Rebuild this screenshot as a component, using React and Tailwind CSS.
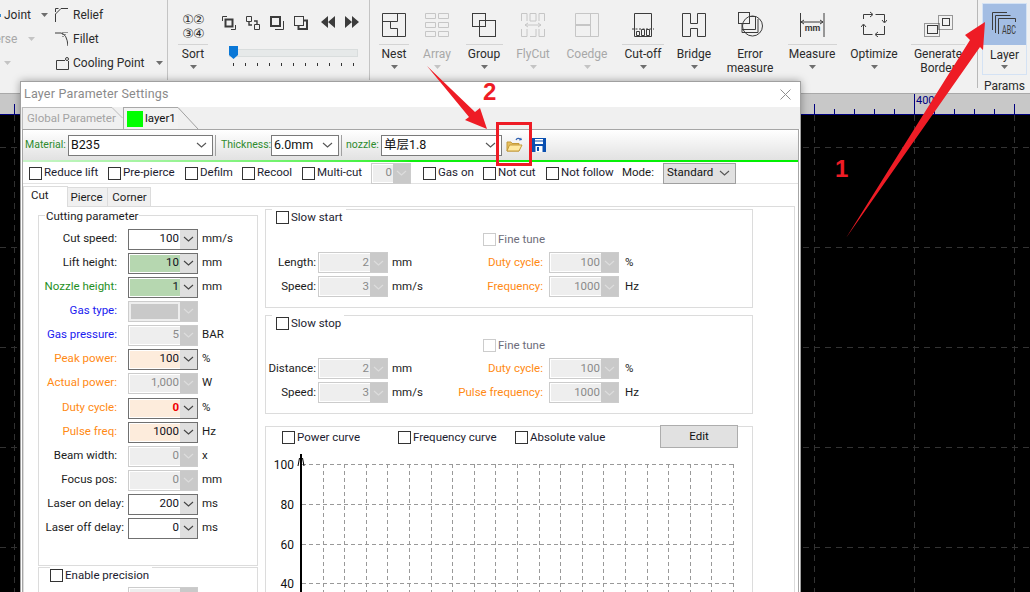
import React from "react";

const RED = "#ee1c25";

function Caret({ gray }) {
  return (
    <svg width="7" height="4" viewBox="0 0 7 4" className="block">
      <path d="M0 0H7L3.5 4Z" fill={gray ? "#c4c4c4" : "#6e6e6e"} />
    </svg>
  );
}

function Chevron({ color = "#555" }) {
  return (
    <svg width="11" height="6" viewBox="0 0 11 6" className="block">
      <path d="M1 1L5.5 5L10 1" fill="none" stroke={color} strokeWidth="1.1" />
    </svg>
  );
}

function Check({ label, disabled, className = "" }) {
  return (
    <div className={`flex items-center gap-[2px] whitespace-nowrap ${className}`}>
      <span
        className={`block h-[13px] w-[13px] shrink-0 border bg-white ${
          disabled ? "border-[#cccccc]" : "border-[#333333]"
        }`}
      />
      <span className={disabled ? "text-[#6d6d7a]" : "text-[#1c1c30]"}>{label}</span>
    </div>
  );
}

// number box with dropdown, the way the dialog draws them
function Spin({ value, tone = "white", width = "w-[70px]" }) {
  const off = tone === "off";
  const fill = {
    white: "bg-white",
    green: "bg-[#b6d7b0]",
    orange: "bg-[#fdecdc]",
    off: "bg-[#eeeeee]",
  }[tone];
  return (
    <div
      className={`flex h-[21px] shrink-0 border ${width} ${
        off ? "border-[#cccccc]" : "border-[#707070]"
      } bg-white`}
    >
      <div
        className={`m-[1px] mr-0 flex flex-1 items-center justify-end pr-[1px] ${fill} ${
          off ? "text-[#8a8a8a]" : "text-[#111122]"
        }`}
      >
        {value}
      </div>
      <div
        className={`flex w-[17px] items-center justify-center ${
          off ? "bg-[#c9c9c9]" : "bg-[#dfdfdf]"
        }`}
      >
        <Chevron color={off ? "#dddddd" : "#444"} />
      </div>
    </div>
  );
}

function Select({ value, width }) {
  return (
    <div className={`flex h-[21px] shrink-0 items-center justify-between border border-[#7a7a7a] bg-white pl-[2px] pr-[5px] text-[12.5px] ${width}`}>
      <span className="text-[#111]">{value}</span>
      <Chevron />
    </div>
  );
}

const cutRows = [
  { label: "Cut speed:", value: "100", unit: "mm/s" },
  { label: "Lift height:", value: "10", tone: "green", unit: "mm" },
  { label: "Nozzle height:", value: "1", tone: "green", unit: "mm", color: "text-[#1f8f1f]" },
  { label: "Gas type:", color: "text-[#1a1af0]", gas: true },
  { label: "Gas pressure:", value: "5", tone: "off", unit: "BAR", color: "text-[#1a1af0]" },
  { label: "Peak power:", value: "100", tone: "orange", unit: "%", color: "text-[#ff8a14]" },
  { label: "Actual power:", value: "1,000", tone: "off", unit: "W", color: "text-[#ff8a14]" },
  { label: "Duty cycle:", value: <b className="text-[#f00000]">0</b>, tone: "orange", unit: "%", color: "text-[#ff8a14]", gap: true },
  { label: "Pulse freq:", value: "1000", tone: "orange", unit: "Hz", color: "text-[#ff8a14]" },
  { label: "Beam width:", value: "0", tone: "off", unit: "x" },
  { label: "Focus pos:", value: "0", tone: "off", unit: "mm" },
  { label: "Laser on delay:", value: "200", unit: "ms", tight: true },
  { label: "Laser off delay:", value: "0", unit: "ms", tight: true },
];

function CutRow({ row }) {
  return (
    <div className={`flex h-[24px] items-center ${row.gap ? "mt-[1px]" : ""}`}>
      <div
        className={`w-[89px] whitespace-nowrap text-right ${row.tight ? "pr-[4px]" : "pr-[11px]"} ${
          row.color || "text-[#1c1c1c]"
        }`}
      >
        {row.label}
      </div>
      {row.gas ? (
        <div className="flex h-[21px] w-[70px] border border-[#cccccc] bg-[#eeeeee]">
          <div className="m-[2px] flex-1 bg-[#c9c9c9]" />
          <div className="flex w-[17px] items-center justify-center bg-[#c9c9c9]">
            <Chevron color="#dddddd" />
          </div>
        </div>
      ) : (
        <Spin value={row.value} tone={row.tone} />
      )}
      <span className="ml-[4px] text-[#1c1c1c]">{row.unit}</span>
    </div>
  );
}

function SlowGroup({ title, rows, height }) {
  return (
    <div className={`relative border border-[#dcdcdc] ${height}`}>
      <div className="absolute left-[6px] top-[-1px] bg-white pl-[4px] pr-[3px]">
        <Check label={title} />
      </div>
      <div className="pl-[217px] pt-[21px]">
        <Check label="Fine tune" disabled />
      </div>
      <div className="mt-[4px] flex flex-col gap-[3px]">
        {rows.map((r) => (
          <div key={r[0].label} className="flex">
            <div className="flex w-[161px] items-center">
              <div className="w-[50px] whitespace-nowrap text-right text-[#1c1c1c]">{r[0].label}</div>
              <div className="ml-[2px]">
                <Spin value={r[0].value} tone="off" />
              </div>
              <span className="ml-[4px] text-[#1c1c1c]">{r[0].unit}</span>
            </div>
            <div className="flex items-center">
              <div className="w-[116px] whitespace-nowrap text-right text-[#ff8a14]">{r[1].label}</div>
              <div className="ml-[6px]">
                <Spin value={r[1].value} tone="off" />
              </div>
              <span className="ml-[6px] text-[#1c1c1c]">{r[1].unit}</span>
            </div>
          </div>
        ))}
      </div>
    </div>
  );
}

function PowerChart() {
  const xs = Array.from({ length: 20 }, (_, i) => 35 + 21.6 * (i + 1));
  const ys = [12.5, 52.5, 92.5, 131.5];
  return (
    <svg width="486" height="140" viewBox="0 0 486 140" className="block">
      {ys.map((y) => (
        <line key={y} x1="36" x2="467.5" y1={y} y2={y} stroke="#999999" strokeDasharray="4 3" />
      ))}
      {xs.map((x) => (
        <line key={x} x1={Math.round(x) + 0.5} x2={Math.round(x) + 0.5} y1="12" y2="140" stroke="#999999" strokeDasharray="4 3" />
      ))}
      <line x1="35" x2="35" y1="2" y2="140" stroke="#000" strokeWidth="2" />
      <path d="M32 14L33.5 6M38 14L36.5 6" stroke="#000" fill="none" />
      <g fontSize="12" fill="#111">
        <text x="28" y="17" textAnchor="end">100</text>
        <text x="28" y="57" textAnchor="end">80</text>
        <text x="28" y="97" textAnchor="end">60</text>
        <text x="28" y="136" textAnchor="end">40</text>
      </g>
    </svg>
  );
}

const S = "#3c3c3c";
const G = "#c6c6c6";

const icons = {
  nest: (
    <svg width="24" height="24" viewBox="0 0 24 24" fill="none" stroke={S}>
      <path d="M.5 .5H23.5V23.5H.5Z M.5 8.5H15.5V.5 M8.5 8.5V15.5H15.5V23.5" />
    </svg>
  ),
  array: (
    <svg width="24" height="24" viewBox="0 0 24 24" fill="none" stroke={G}>
      <path d="M.5 .5h10v5h-10Z M13.5 .5h10v5h-10Z M.5 9.5h10v5h-10Z M13.5 9.5h10v5h-10Z M.5 18.5h10v5h-10Z M13.5 18.5h10v5h-10Z" />
    </svg>
  ),
  group: (
    <svg width="24" height="24" viewBox="0 0 24 24" fill="none" stroke={S}>
      <rect x=".5" y=".5" width="13" height="13" />
      <rect x="7.5" y="7.5" width="16" height="16" />
    </svg>
  ),
  flycut: (
    <svg width="24" height="24" viewBox="0 0 24 24" fill="none" stroke={G}>
      <path d="M.5 8V.5H6V8 M9 .5H15V8H9Z M18 8V.5H23.5V8 M.5 16V23.5H6V16 M9 23.5H15V16 M18 16V23.5H23.5V16 M4 12H20 M4 12L7 10M4 12L7 14 M20 12L17 10M20 12L17 14" />
    </svg>
  ),
  coedge: (
    <svg width="24" height="24" viewBox="0 0 24 24" fill="none" stroke={G}>
      <path d="M.5 .5H23.5V23.5H.5Z M15.5 .5V23.5 M.5 11.5H15.5 M.5 12.5H15.5" />
    </svg>
  ),
  cutoff: (
    <svg width="22" height="24" viewBox="0 0 22 24" fill="none" stroke={S}>
      <path d="M2.5 16V.5H19.5V16 M2.5 16V23.5H19.5V16" />
      <path d="M0 16H22" strokeDasharray="2 1.5" />
      <path d="M4.5 18.5h3v4h-3Z M9.5 16.5h3v6h-3Z M14.5 16.5h3v6h-3Z" />
    </svg>
  ),
  bridge: (
    <svg width="24" height="24" viewBox="0 0 24 24" fill="none" stroke={S}>
      <path d="M.5 .5H8.5V10.5H15.5V.5H23.5V23.5H15.5V15.5H8.5V23.5H.5Z" />
    </svg>
  ),
  error: (
    <svg width="25" height="25" viewBox="0 0 25 25" fill="none" stroke={S}>
      <rect x=".5" y=".5" width="11" height="11" />
      <circle cx="14.5" cy="14" r="10" />
      <path d="M4 17.5H17.5V4.5H11.5 M4 11.5V20.5H20V7" />
    </svg>
  ),
  measure: (
    <svg width="25" height="24" viewBox="0 0 25 24" fill="none" stroke={S}>
      <path d="M.5 0V24 M24 0V24 M1 9H23 M1 9L4 7M1 9L4 11 M23 9L20 7M23 9L20 11" />
      <text x="12.5" y="18" fontSize="9" fontWeight="700" textAnchor="middle" fill={S} stroke="none">mm</text>
    </svg>
  ),
  optimize: (
    <svg width="26" height="26" viewBox="-1 0 26 26" fill="none" stroke={S}>
      <path d="M1.5 8V3.5H10 M8 1L11 3.5L8 6 M13.5 3.5H22.5V11 M20 9L22.5 12L25 9 M22.5 15V23.5H14 M16 21L13 23.5L16 26 M10.5 23.5H1.5V14 M-1 16L1.5 13L4 16" />
    </svg>
  ),
  generate: (
    <svg width="29" height="22" viewBox="0 0 29 22" fill="none" stroke={S}>
      <path d="M.5 8.5H15.5V21.5H.5Z M14.5 .5H28.5V14.5H14.5Z" strokeDasharray="1 1" />
      <rect x="3.5" y="10.5" width="10" height="8" />
      <rect x="18.5" y="3.5" width="7" height="7" />
    </svg>
  ),
  layer: (
    <svg width="25" height="26" viewBox="0 0 25 26" fill="none" stroke={S}>
      <path d="M.5 18V.5H15 M3.5 21V3.5H18.5 M6.5 22V6.5H23.5V10" />
      <text x="10" y="22" fontSize="12" textLength="14" lengthAdjust="spacingAndGlyphs" fill={S} stroke="none">ABC</text>
    </svg>
  ),
};

const ribbonButtons = [
  { label: "Nest", icon: "nest", w: "w-[36px]", line: "w-[30px]" },
  { label: "Array", icon: "array", w: "w-[50px]", off: true },
  { label: "Group", icon: "group", w: "w-[44px]", line: "w-[37px]" },
  { label: "FlyCut", icon: "flycut", w: "w-[54px]", off: true },
  { label: "Coedge", icon: "coedge", w: "w-[54px]", off: true },
  { label: "Cut-off", icon: "cutoff", w: "w-[58px]", line: "w-[42px]" },
  { label: "Bridge", icon: "bridge", w: "w-[44px]" },
  { label: "Error measure", icon: "error", w: "w-[68px]", noCaret: true, two: true },
  { label: "Measure", icon: "measure", w: "w-[56px]", line: "w-[49px]" },
  { label: "Optimize", icon: "optimize", w: "w-[68px]" },
  { label: "Generate Border", icon: "generate", w: "w-[60px]", line: "w-[54px]", noCaret: true, two: true },
];

function RibbonButton({ b }) {
  return (
    <div className={`flex shrink-0 flex-col items-center ${b.w}`}>
      <div className="flex h-[44px] items-end pb-[7px]">{icons[b.icon]}</div>
      <div className={`h-[1px] ${b.line || "w-0"} bg-[#d4d4d4]`} />
      <div
        className={`mt-[1px] pt-[1px] text-center text-[12px] leading-[14px] ${
          b.off ? "text-[#a8a8a8]" : "text-[#2b2b2b]"
        } ${b.two ? "w-[58px]" : "whitespace-nowrap"}`}
      >
        {b.label}
      </div>
      {!b.noCaret && (
        <div className="mt-[4px]">
          <Caret gray={b.off} />
        </div>
      )}
    </div>
  );
}

function Ribbon() {
  return (
    <div className="flex h-[94px] shrink-0 border-b border-[#a9a9a9] bg-[#f1f1f1] text-[12px] text-[#2b2b2b]">
      <div className="flex h-[80px] w-[168px] shrink-0 border-r border-[#c4c4c4] pt-[6px]">
        <div className="flex w-[55px] shrink-0 flex-col gap-[6px]">
          <div className="flex h-[18px] items-center">
            <span className="mr-[3px] ml-[-1px] h-[3px] w-[2px] bg-[#3a8fd6]" />
            <span>Joint</span>
            <span className="ml-[10px]"><Caret /></span>
          </div>
          <div className="flex h-[18px] items-center text-[#a8a8a8]">
            <span className="ml-[-25px]">Reverse</span>
            <span className="ml-[11px]"><Caret gray /></span>
          </div>
          <div className="flex h-[18px] items-center pl-[4px]"><Caret gray /></div>
        </div>
        <div className="flex flex-col gap-[6px]">
          <div className="flex h-[18px] items-center gap-[5px]">
            <svg width="13" height="14" viewBox="0 0 13 14" fill="none" stroke={S}>
              <path d="M.5 14V6M.5 4V.5H3.5M6 .5H13M.5 6L6 .5" />
            </svg>
            Relief
          </div>
          <div className="flex h-[18px] items-center gap-[5px]">
            <svg width="13" height="14" viewBox="0 0 13 14" fill="none" stroke={S}>
              <path d="M0 1H6Q12 2 13 14" />
              <path d="M8 0V5M10 0V3M12 0V2" strokeDasharray="1 1" />
            </svg>
            Fillet
          </div>
          <div className="flex h-[18px] items-center gap-[4px] whitespace-nowrap pl-[1px]">
            <svg width="13" height="13" viewBox="0 0 13 13" fill="none" stroke={S} className="shrink-0">
              <path d="M.5 3.5H9M12.5 4V12.5H.5V3.5" />
              <circle cx="11" cy="2" r="1.5" />
            </svg>
            <span>Cooling Point</span>
            <span className="ml-[8px]"><Caret /></span>
          </div>
        </div>
      </div>

      <div className="flex h-[80px] w-[202px] shrink-0 border-r border-[#c4c4c4]">
        <div className="ml-[10px] flex w-[30px] flex-col items-center">
          <div className="flex h-[44px] w-[30px] flex-col items-center pt-[13px] font-['DejaVu_Sans',sans-serif] text-[13px] leading-[14px] tracking-[-1px]">
            <span>①②</span>
            <span>③④</span>
          </div>
          <div className="h-[1px] w-[30px] shrink-0 bg-[#d4d4d4]" />
          <div className="pt-[2px] leading-[14px]">Sort</div>
          <div className="mt-[4px]"><Caret /></div>
        </div>
        <div className="ml-[14px] flex w-[140px] flex-col">
          <div className="mt-[16px] flex h-[14px] gap-[10px]">
            <svg width="14" height="14" viewBox="0 0 14 14" fill="none" stroke={S}>
              <path d="M.5 5V.5H5M13.5 9V13.5H9" />
              <rect x="3.5" y="3.5" width="7" height="7" strokeWidth="2" />
            </svg>
            <svg width="14" height="14" viewBox="0 0 14 14" fill="none" stroke={S}>
              <path d="M.5 .5h5v5h-5Z M8.5 8.5h5v5h-5Z" />
              <path d="M3 6v3h3M8 5h3v3" strokeWidth="1.4" />
            </svg>
            <svg width="14" height="14" viewBox="0 0 14 14" fill="none" stroke={S}>
              <rect x="1" y="1" width="9" height="9" strokeWidth="2" />
              <path d="M13.5 5V13.5H5" />
            </svg>
            <svg width="14" height="14" viewBox="0 0 14 14" fill="none" stroke={S}>
              <rect x=".5" y=".5" width="9" height="9" />
              <path d="M10 4.5H13V13H4.5V10" strokeWidth="2" />
            </svg>
            <svg width="14" height="12" viewBox="0 0 14 12" className="ml-[3px]" fill={S}>
              <path d="M7 0V12L0 6Z M14 0V12L7 6Z" />
            </svg>
            <svg width="14" height="12" viewBox="0 0 14 12" fill={S}>
              <path d="M0 0V12L7 6Z M7 0V12L14 6Z" />
            </svg>
          </div>
          <div className="relative ml-[7px] mt-[19px] h-[8px] w-[129px] border border-[#d9dddd] bg-[#e6e9e9]">
            <svg width="9" height="13" viewBox="0 0 9 13" className="absolute left-[-1px] top-[-4px]">
              <path d="M0 0H9V9L4.5 13L0 9Z" fill="#0a78d7" />
            </svg>
          </div>
          <div className="ml-[11px] mt-[6px] flex w-[121px] justify-between">
            {Array.from({ length: 11 }, (_, i) => (
              <span key={i} className="h-[3px] w-[1px] bg-[#333]" />
            ))}
          </div>
        </div>
      </div>

      <div className="relative flex h-[92px] shrink-0 items-start">
        <div className="ml-[6px] flex">
          {ribbonButtons.map((b) => (
            <RibbonButton key={b.label} b={b} />
          ))}
        </div>
        <div className="ml-[9px] h-[88px] w-[1px] bg-[#b8b8b8]" />
        <div className="ml-[4px] flex w-[45px] flex-col items-center">
          <div className="mt-[3px] flex h-[72px] w-[45px] flex-col items-center border border-[#d4e2f4] bg-[#f1f1f1]">
            <div className="flex h-[41px] w-full items-center justify-center bg-[#a3bde3]">{icons.layer}</div>
            <div className="pt-[2px] leading-[16px]">Layer</div>
            <div className="mt-[2px]"><Caret /></div>
          </div>
          <div className="mt-[4px] leading-[14px]">Params</div>
        </div>
      </div>
    </div>
  );
}

function Ruler() {
  const minors = [834, 854, 874, 894, 934, 954, 974, 994];
  return (
    <svg width="1030" height="21" viewBox="0 0 1030 21" className="block shrink-0 bg-[#c8c8c8]">
      <g stroke="#00007f">
        <line x1="0" x2="1030" y1="20.5" y2="20.5" />
        <path d="M14.5 10V20 M814.5 10V20 M914.5 0V20 M1014.5 10V20" fill="none" />
        {minors.map((x) => (
          <line key={x} x1={x + 0.5} x2={x + 0.5} y1="15" y2="20" />
        ))}
      </g>
      <text x="916" y="10" fontSize="11" fill="#00007f">4000</text>
    </svg>
  );
}

function Canvas() {
  return (
    <svg className="block min-h-0 w-full flex-1 bg-black" viewBox="0 0 1030 477">
      <g stroke="#333333" strokeDasharray="6 5">
        {[14, 814, 914, 1014].map((x) => (
          <line key={x} x1={x + 0.5} x2={x + 0.5} y1="0" y2="477" />
        ))}
        {[32, 132, 232, 332, 432].map((y) => (
          <line key={y} x1="0" x2="1030" y1={y + 0.5} y2={y + 0.5} />
        ))}
      </g>
    </svg>
  );
}

function Dialog() {
  return (
    <div className="absolute left-[20px] top-[81px] flex h-[511px] w-[781px] flex-col border border-b-0 border-[#a0a0a0] bg-white text-[11.5px] shadow-[0_0_8px_rgba(0,0,0,0.35)]">
      <div className="flex h-[25px] shrink-0 items-center justify-between pl-[3px] pr-[9px]">
        <span className="text-[12.5px] tracking-[0.2px] text-[#8a8a8a]">Layer Parameter Settings</span>
        <svg width="11" height="11" viewBox="0 0 11 11" stroke="#8f8f8f" fill="none">
          <path d="M.5 .5L10.5 10.5M10.5 .5L.5 10.5" />
        </svg>
      </div>

      <div className="flex h-[22px] shrink-0 items-end bg-[#f0f0f0] pl-[1px]">
        <div className="flex h-[22px] w-[90px] items-center whitespace-nowrap border-l border-t border-[#bcbcbc] pl-[4px] text-[#a3a3a3]">
          Global Parameter
        </div>
        <svg width="11" height="22" viewBox="0 0 11 22" fill="none" stroke="#bcbcbc">
          <path d="M0 .5L10.5 11" />
        </svg>
        <div className="flex h-[22px] w-[55px] items-center gap-[2px] border-l border-t border-[#a8a8a8] bg-[#f2f2f2] pl-[3px] text-[#111]">
          <span className="h-[16px] w-[16px] shrink-0 bg-[#00ff00]" />
          layer1
        </div>
        <svg width="21" height="22" viewBox="0 0 21 22" fill="none" stroke="#a0a0a0">
          <path d="M0 .5L20 22" />
        </svg>
      </div>

      <div className="mx-[1px] mb-0 flex min-h-0 flex-1 flex-col border border-b-0 border-[#a6a6a6]">
        <div className="flex h-[30px] shrink-0 items-center bg-linear-to-b from-[#ffffff] to-[#e2e2e2] pl-[2px] text-[10.5px] text-[#2e8b2e]">
          <span className="w-[43px] whitespace-nowrap">Material:</span>
          <Select value="B235" width="w-[145px]" />
          <span className="mx-[2px] h-[21px] w-[1px] bg-[#a0a0a0]" />
          <span className="ml-[3px] w-[50px] whitespace-nowrap">Thickness:</span>
          <Select value="6.0mm" width="w-[68px]" />
          <span className="mx-[2px] h-[21px] w-[1px] bg-[#a0a0a0]" />
          <span className="ml-[2px] w-[35px] whitespace-nowrap">nozzle:</span>
          <Select value="单层1.8" width="w-[121px]" />
          <svg width="17" height="16" viewBox="0 0 17 16" className="ml-[4px]">
            <path d="M10 3C11 1 13 1 14.5 2.5" fill="none" stroke="#2f5fb0" strokeWidth="1.2" />
            <path d="M13 3.5L16 3L15 .5Z" fill="#2f5fb0" />
            <path d="M1 14V5H5L6 6.5H13V14Z" fill="#e8c060" stroke="#c49a3a" />
            <path d="M1 14L3.5 8H16L13 14Z" fill="#ffe9a0" stroke="#c49a3a" />
          </svg>
          <svg width="14" height="14" viewBox="0 0 14 14" className="ml-[9px]">
            <path d="M0 0H14V14H0Z" fill="#0a4fb0" />
            <rect x="3" y="1" width="8" height="5" fill="#fff" />
            <rect x="3" y="2.5" width="8" height="1" fill="#0a4fb0" />
            <rect x="3.5" y="8" width="7" height="6" fill="#fff" />
            <rect x="5" y="9" width="2" height="4" fill="#0a4fb0" />
          </svg>
        </div>
        <div className="h-[2px] shrink-0 bg-linear-to-r from-[#c8f4c8] via-[#10f010] via-50% to-[#00f000]" />

        <div className="flex h-[22px] shrink-0 items-center border-b border-[#e2e2e2] pt-[1px]">
          <Check label="Reduce lift" className="ml-[6px] w-[79px]" />
          <Check label="Pre-pierce" className="w-[77px]" />
          <Check label="Defilm" className="w-[57px]" />
          <Check label="Recool" className="w-[60px]" />
          <Check label="Multi-cut" className="w-[69px]" />
          <Spin value="0" tone="off" width="w-[40px]" />
          <Check label="Gas on" className="ml-[12px] w-[60px]" />
          <Check label="Not cut" className="w-[63px]" />
          <Check label="Not follow" className="w-[76px]" />
          <span className="w-[41px] text-[#1c1c1c]">Mode:</span>
          <div className="flex h-[21px] w-[73px] items-center justify-between border border-[#a0a0a0] bg-[#e1e1e1] pl-[3px] pr-[5px] text-[#111]">
            Standard
            <Chevron />
          </div>
        </div>

        <div className="mt-[1px] flex h-[21px] shrink-0 items-end text-[#1c1c1c]">
          <div className="relative z-10 mb-[-1px] flex h-[21px] w-[45px] items-center border border-b-0 border-[#dcdcdc] bg-white pb-[2px] pl-[7px]">Cut</div>
          <div className="flex h-[19px] w-[40px] items-center justify-center border-r border-t border-[#dcdcdc] bg-[#f0f0f0] pr-[2px] pt-[1px]">Pierce</div>
          <div className="flex h-[19px] w-[43px] items-center justify-center border-r border-t border-[#dcdcdc] bg-[#f0f0f0] pl-[1px] pt-[1px]">Corner</div>
        </div>

        <div className="mr-[3px] flex min-h-0 flex-1 items-start overflow-hidden border border-b-0 border-[#dcdcdc] pl-[14px] pt-[2px]">
          <div className="mt-[6px] flex w-[220px] shrink-0 flex-col gap-[1px]">
            <div className="relative h-[351px] border border-[#dcdcdc] pt-[11px]">
              <span className="absolute left-[6px] top-[-7px] bg-white px-[1px] leading-[14px] text-[#1c1c1c]">Cutting parameter</span>
              {cutRows.map((row) => (
                <CutRow key={row.label} row={row} />
              ))}
            </div>
            <div className="relative h-[60px] border border-[#dcdcdc]">
              <div className="absolute left-[11px] top-[-1px] bg-white pr-[3px]">
                <Check label="Enable precision" />
              </div>
              <div className="ml-[89px] mt-[19px]">
                <Spin value="" tone="off" />
              </div>
            </div>
          </div>

          <div className="ml-[7px] flex w-[488px] shrink-0 flex-col">
            <SlowGroup
              title="Slow start"
              height="h-[99px]"
              rows={[
                [
                  { label: "Length:", value: "2", unit: "mm" },
                  { label: "Duty cycle:", value: "100", unit: "%" },
                ],
                [
                  { label: "Speed:", value: "3", unit: "mm/s" },
                  { label: "Frequency:", value: "1000", unit: "Hz" },
                ],
              ]}
            />
            <div className="mt-[7px]">
              <SlowGroup
                title="Slow stop"
                height="h-[99px]"
                rows={[
                  [
                    { label: "Distance:", value: "2", unit: "mm" },
                    { label: "Duty cycle:", value: "100", unit: "%" },
                  ],
                  [
                    { label: "Speed:", value: "3", unit: "mm/s" },
                    { label: "Pulse frequency:", value: "1000", unit: "Hz" },
                  ],
                ]}
              />
            </div>
            <div className="mt-[12px] h-[200px] border border-[#dcdcdc]">
              <div className="flex h-[25px] items-start">
                <Check label="Power curve" className="ml-[16px] mt-[2px] w-[116px]" />
                <Check label="Frequency curve" className="mt-[2px] w-[117px]" />
                <Check label="Absolute value" className="mt-[2px] w-[145px]" />
                <div className="mt-[-2px] flex h-[23px] w-[78px] items-center justify-center border border-[#adadad] bg-[#e1e1e1] text-[#111]">
                  Edit
                </div>
              </div>
              <PowerChart />
            </div>
          </div>
        </div>
      </div>
    </div>
  );
}

function Annotations() {
  return (
    <>
      <svg className="absolute left-0 top-0" width="1030" height="592" viewBox="0 0 1030 592">
        <path d="M846 238L970 40L965 35L985 22L983 50L980 47Z" fill={RED} />
        <path d="M427 66L475 112L480 108L487 129L465 120L469 117Z" fill={RED} />
      </svg>
      <div className="absolute left-[835px] top-[155px] font-['Liberation_Sans',sans-serif] text-[24px] font-bold leading-[28px] text-[#ee1c25]">1</div>
      <div className="absolute left-[483px] top-[78px] font-['Liberation_Sans',sans-serif] text-[24px] font-bold leading-[28px] text-[#ee1c25]">2</div>
      <div className="absolute left-[496px] top-[122px] h-[44px] w-[36px] border-[3px] border-[#ee1c25]" />
    </>
  );
}

export default function App() {
  return (
    <div className="relative flex h-[592px] w-[1030px] flex-col overflow-hidden bg-black font-['Roboto','Noto_Sans_CJK_SC',sans-serif]">
      <Ribbon />
      <Ruler />
      <Canvas />
      <Dialog />
      <Annotations />
    </div>
  );
}
